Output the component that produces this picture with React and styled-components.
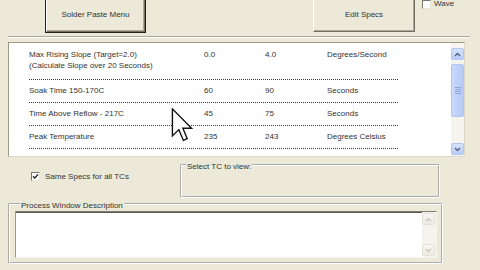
import React from 'react';
import styled, { createGlobalStyle } from 'styled-components';

const Global = createGlobalStyle`
  html, body { margin: 0; padding: 0; background: #ECE9D8; }
  body { font-family: "Liberation Sans", Arial, sans-serif; }
`;

const Page = styled.div`
  position: relative;
  box-sizing: border-box;
  width: 480px;
  height: 270px;
  overflow: hidden;
  padding-left: 8px;
  background: #ECE9D8;
  font-family: "Liberation Sans", Arial, sans-serif;
  font-size: 8px;
  line-height: 10px;
  color: #333;
`;

const TopBar = styled.div`
  display: flex;
  align-items: flex-end;
  height: 32px;
`;

const PushButton = styled.div`
  box-sizing: border-box;
  flex: none;
  width: ${(p) => p.$w}px;
  height: 46px;
  margin-left: ${(p) => p.$ml}px;
  padding-bottom: 11px;
  display: flex;
  align-items: flex-end;
  justify-content: center;
  background: #ECE9D8;
  border: 1px solid;
  border-color: #fff #716F64 #716F64 #fff;
  box-shadow: inset -1px -1px 0 #ACA899
    ${(p) => (p.$default ? ', 0 0 0 1px #222' : '')};
`;

const WaveBox = styled.div`
  align-self: flex-start;
  margin: -1px 0 0 ${(p) => p.$ml}px;
  display: flex;
  align-items: center;
  gap: 3px;
  height: 10px;
`;

const CheckSquare = styled.span`
  box-sizing: border-box;
  display: inline-flex;
  align-items: center;
  justify-content: center;
  width: 9px;
  height: 9px;
  background: #fff;
  border: 1px solid;
  border-color: #7A786C #E6E4DA #E6E4DA #7A786C;
`;

const Separator = styled.div`
  width: 462px;
  margin-top: 4px;
  border-top: 1px solid #ACA899;
  border-bottom: 1px solid #fff;
`;

const ListBox = styled.div`
  box-sizing: border-box;
  display: flex;
  width: 457px;
  height: 115px;
  margin-top: 4px;
  background: #fff;
  border: 1px solid;
  border-color: #9D9A8A #DCD9CC #DCD9CC #9D9A8A;
`;

const ListBody = styled.div`
  flex: 1;
  padding-left: 20px;
`;

const Row = styled.div`
  display: grid;
  grid-template-columns: 175px 61px 62px 1fr;
  width: 369px;
  padding: ${(p) => (p.$first ? '6px 0 8px' : '5px 0 6px')};
  line-height: 11px;
  border-bottom: 1px dotted #3a3a3a;
`;

const Cell = styled.div`
  white-space: nowrap;
`;

const ScrollBar = styled.div`
  box-sizing: border-box;
  width: 13px;
  padding: 5px 0 1px;
  display: flex;
  flex-direction: column;
  background: #F5F4EF;
`;

const ScrollButton = styled.div`
  box-sizing: border-box;
  height: 12px;
  display: flex;
  align-items: center;
  justify-content: center;
  border-radius: 2px;
  border: 1px solid ${(p) => (p.$faded ? '#E4E2D8' : '#B4C6EE')};
  background: ${(p) =>
    p.$faded
      ? 'linear-gradient(#F7F6F2, #ECEAE2)'
      : 'linear-gradient(#D6E2FD, #B9CCF6)'};
`;

const Thumb = styled.div`
  box-sizing: border-box;
  height: 53px;
  margin-top: 4px;
  display: flex;
  flex-direction: column;
  align-items: center;
  justify-content: center;
  gap: 1px;
  border-radius: 2px;
  border: 1px solid #B4C6EE;
  background: linear-gradient(90deg, #CAD9FC, #B6C9F6);
`;

const Grip = styled.span`
  width: 6px;
  height: 1px;
  background: #8FA6D9;
`;

const Track = styled.div`
  flex: 1;
`;

const BottomRow = styled.div`
  display: flex;
  height: 40px;
  margin-top: 1px;
`;

const CheckCell = styled.div`
  box-sizing: border-box;
  width: 172px;
  padding: 14px 0 0 23px;
  display: flex;
  align-items: flex-start;
  gap: 5px;
`;

const CheckText = styled.span`
  line-height: 9px;
`;

const Group = styled.fieldset`
  box-sizing: border-box;
  width: ${(p) => p.$w}px;
  height: ${(p) => p.$h}px;
  margin: ${(p) => p.$mt || 0}px 0 0;
  padding: ${(p) => p.$pad || '0'};
  min-width: 0;
  border: 2px groove #fff;
  border-radius: 2px;
`;

const Legend = styled.legend`
  margin-left: ${(p) => p.$ml}px;
  padding: 4px 1px 0;
  line-height: 10px;
  color: #333;
`;

const EditArea = styled.div`
  box-sizing: border-box;
  display: flex;
  justify-content: flex-end;
  width: 422px;
  height: 47px;
  background: #fff;
  border: 1px solid;
  border-color: #7E7C72 #F4F3EE #F4F3EE #9D9A8A;
  box-shadow: inset 0 1px 0 #5A584F;
`;

const EditScroll = styled.div`
  box-sizing: border-box;
  width: 14px;
  padding: 1px 1px 1px 0;
  display: flex;
  flex-direction: column;
  background: #F4F3EE;
`;

const Cursor = styled.svg`
  position: absolute;
  left: 171px;
  top: 108px;
`;

const Chevron = ({ up, color }) => (
  <svg width="7" height="5" viewBox="0 0 7 5">
    <polyline
      points={up ? '1,4 3.5,1.5 6,4' : '1,1 3.5,3.5 6,1'}
      fill="none"
      stroke={color}
      strokeWidth="1.4"
    />
  </svg>
);

const rows = [
  {
    label: ['Max Rising Slope (Target=2.0)', '(Calculate Slope over 20 Seconds)'],
    min: '0.0',
    max: '4.0',
    unit: 'Degrees/Second',
  },
  { label: ['Soak Time 150-170C'], min: '60', max: '90', unit: 'Seconds' },
  { label: ['Time Above Reflow - 217C'], min: '45', max: '75', unit: 'Seconds' },
  { label: ['Peak Temperature'], min: '235', max: '243', unit: 'Degrees Celsius' },
];

export default function App() {
  return (
    <>
      <Global />
      <Page>
        <TopBar>
          <PushButton $w={99} $ml={38} $default>
            Solder Paste Menu
          </PushButton>
          <PushButton $w={102} $ml={168}>
            Edit Specs
          </PushButton>
          <WaveBox $ml={7}>
            <CheckSquare />
            <span>Wave</span>
          </WaveBox>
        </TopBar>
        <Separator />
        <ListBox>
          <ListBody>
            {rows.map((r, i) => (
              <Row key={i} $first={i === 0}>
                <Cell>
                  {r.label.map((l) => (
                    <div key={l}>{l}</div>
                  ))}
                </Cell>
                <Cell>{r.min}</Cell>
                <Cell>{r.max}</Cell>
                <Cell>{r.unit}</Cell>
              </Row>
            ))}
          </ListBody>
          <ScrollBar>
            <ScrollButton>
              <Chevron up color="#4D6185" />
            </ScrollButton>
            <Thumb>
              <Grip />
              <Grip />
              <Grip />
              <Grip />
            </Thumb>
            <Track />
            <ScrollButton>
              <Chevron color="#4D6185" />
            </ScrollButton>
          </ScrollBar>
        </ListBox>
        <BottomRow>
          <CheckCell>
            <CheckSquare>
              <svg width="7" height="7" viewBox="0 0 7 7">
                <polyline
                  points="1,3.2 2.8,5 6,1.5"
                  fill="none"
                  stroke="#222"
                  strokeWidth="1.3"
                />
              </svg>
            </CheckSquare>
            <CheckText>Same Specs for all TCs</CheckText>
          </CheckCell>
          <Group $w={260} $h={40}>
            <Legend $ml={4}>Select TC to view:</Legend>
          </Group>
        </BottomRow>
        <Group $w={435} $h={67} $mt={-1} $pad="0 4px 3px 5px">
          <Legend $ml={5}>Process Window Description</Legend>
          <EditArea>
            <EditScroll>
              <ScrollButton $faded>
                <Chevron up color="#C9C7BC" />
              </ScrollButton>
              <Track />
              <ScrollButton $faded>
                <Chevron color="#C9C7BC" />
              </ScrollButton>
            </EditScroll>
          </EditArea>
        </Group>
        <Cursor width="22" height="34" viewBox="0 0 12 19.5">
          <path
            d="M0.5,0.5 L0.5,16 L4.2,12.4 L6.8,18.6 L9,17.6 L6.5,11.6 L11.5,11.6 Z"
            fill="#fff"
            stroke="#111"
            strokeWidth="0.8"
            strokeLinejoin="miter"
          />
        </Cursor>
      </Page>
    </>
  );
}
